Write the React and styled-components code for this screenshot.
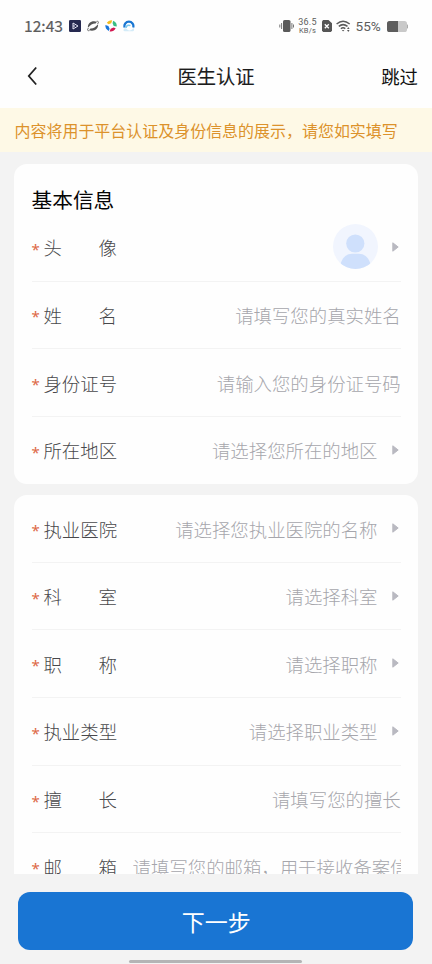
import React from "react";
import styled, { createGlobalStyle } from "styled-components";

const GlobalStyle = createGlobalStyle`
  * { box-sizing: border-box; }
  body {
    margin: 0;
    background: #f3f3f3;
    font-family: "Noto Sans CJK SC", sans-serif;
  }
`;

const Screen = styled.div`
  display: flex;
  flex-direction: column;
  width: 432px;
  height: 964px;
  overflow: hidden;
  background: #f3f3f3;
`;

const StatusBar = styled.header`
  display: flex;
  justify-content: space-between;
  align-items: center;
  flex: none;
  height: 52px;
  padding: 0 24px 0 24px;
  background: #fefefe;
  color: #5c5c5c;
`;

const StatusGroup = styled.div`
  display: flex;
  align-items: center;
  gap: ${(p) => p.$gap}px;
`;

const Clock = styled.span`
  width: 38px;
  margin-right: 1px;
  margin-top: -2px;
  font: 400 15.6px/20px "Noto Sans CJK SC", sans-serif;
  -webkit-text-stroke: 0.2px currentColor;
  white-space: nowrap;
`;

const NetSpeed = styled.span`
  display: flex;
  flex-direction: column;
  width: 19px;
  align-items: center;
  font: 400 9px/9px Roboto, sans-serif;
  letter-spacing: 0.2px;
  white-space: nowrap;
`;

const SpeedUnit = styled.span`
  font-size: 7.5px;
  line-height: 7px;
`;

const Percent = styled.span`
  width: 27px;
  font: 400 13.6px/18px Roboto, sans-serif;
  white-space: nowrap;
`;

const NavBar = styled.nav`
  display: grid;
  grid-template-columns: 80px 1fr 80px;
  align-items: center;
  flex: none;
  height: 56px;
  padding: 0 14px 8px 24px;
  background: #fefefe;
`;

const BackButton = styled.button`
  display: flex;
  padding: 0;
  border: 0;
  background: none;
`;

const Title = styled.h1`
  margin: 0;
  padding-right: 10px;
  text-align: center;
  font-size: 19.3px;
  line-height: 28px;
  font-weight: 400;
  -webkit-text-stroke: 0.1px currentColor;
  color: #1c1c1c;
`;

const SkipButton = styled.button`
  padding: 0;
  border: 0;
  background: none;
  text-align: right;
  font: 400 18.4px/28px "Noto Sans CJK SC", sans-serif;
  color: #111;
`;

const Notice = styled.p`
  flex: none;
  height: 44px;
  margin: 0;
  padding-left: 14.5px;
  background: #fef9e6;
  color: #dc922b;
  font-size: 15.97px;
  line-height: 44px;
  white-space: nowrap;
`;

const FormArea = styled.main`
  display: flex;
  flex-direction: column;
  gap: 11px;
  flex: none;
  height: 722px;
  padding: 12px 14px 0;
  overflow: hidden;
`;

const Card = styled.section`
  flex: none;
  height: ${(p) => (p.$height ? `${p.$height}px` : "auto")};
  padding: ${(p) => p.$top || 0}px 17px 0 18px;
  border-radius: 13px;
  background: #fefefe;
`;

const CardTitle = styled.h2`
  height: 28px;
  margin: 0 0 1px -0.5px;
  font-size: 20.7px;
  line-height: 28px;
  font-weight: 400;
  color: #050505;
`;

const Row = styled.div`
  display: flex;
  align-items: center;
  height: 67.65px;
  border-bottom: 1px solid ${(p) => (p.$last ? "transparent" : "#f3f3f3")};
`;

const Required = styled.span`
  width: 12px;
  flex: none;
  margin-left: -0.6px;
  padding-top: 3px;
  font: 400 15px/24px "Noto Sans", sans-serif;
  color: #dd6845;
`;

const Label = styled.span`
  display: flex;
  justify-content: space-between;
  flex: none;
  width: 73.6px;
  font-size: 18.4px;
  line-height: 28px;
  font-weight: 300;
  color: #48484b;
`;

const Value = styled.span`
  flex: 1;
  min-width: 0;
  margin-left: 15.6px;
  margin-right: ${(p) => (p.$arrow ? 14.5 : 0.3)}px;
  overflow: hidden;
  text-align: ${(p) => (p.$clipped ? "left" : "right")};
  white-space: nowrap;
  font-size: 18.4px;
  line-height: 28px;
  font-weight: 300;
  color: #a6a6ac;
`;

const AvatarSlot = styled.span`
  display: flex;
  margin-left: auto;
  margin-right: 14px;
  margin-bottom: 1px;
`;

const ArrowIcon = styled.svg`
  flex: none;
  width: 7px;
  height: 10px;
  margin-right: 2px;
  margin-bottom: 1px;
`;

const Footer = styled.footer`
  display: flex;
  flex-direction: column;
  align-items: center;
  flex: 1;
  padding: 18px 18.5px 0 18px;
`;

const NextButton = styled.button`
  width: 395px;
  height: 58px;
  flex: none;
  padding: 0 0 0 1px;
  border: 0;
  border-radius: 12px;
  background: #1975d3;
  color: #fff;
  font: 400 23px/58px "Noto Sans CJK SC", sans-serif;
`;

const HomeIndicator = styled.div`
  width: 173px;
  height: 3px;
  margin-top: 10px;
  border-radius: 2px;
  background: #b4b4b5;
`;

const PlayAppIcon = () => (
  <svg width="12" height="12" viewBox="0 0 12 12">
    <rect width="12" height="12" rx="1.2" fill="#262950" />
    <path d="M4 3v6l5-3-5-3M4 6h2" fill="none" stroke="#e5e5f5" strokeWidth="1" />
  </svg>
);

const PlanetIcon = () => (
  <svg width="12" height="12" viewBox="0 0 13 12">
    <path d="M1 7.8C.7 3.6 3.6.9 7.6.9q1.8 0 3 .7L9.3 3.2Q5.2 2.8 1 7.8z" fill="#555" />
    <path d="M12 4.2c.3 4.2-2.6 6.9-6.6 6.9q-1.8 0-3-.7l1.3-1.6Q7.8 9.2 12 4.2z" fill="#555" />
    <path d="M1.5 8.2C0 10.2.3 11.5 2.7 11M11.5 3.8C13 1.8 12.7.5 10.3 1" fill="none" stroke="#666" strokeWidth="1" />
  </svg>
);

const PinwheelIcon = () => (
  <svg width="12" height="12" viewBox="0 0 12 12">
    <path d="M1.8 2.8Q4-.3 7.2.4L6.2 3.3 3.6 4.3z" fill="#f3bd20" />
    <path d="M8.2.7q3.9 1.7 3.5 5.7L8.7 6 7.6 3.3z" fill="#39bd83" />
    <path d="M10.7 8.3Q8.5 12.2 4.6 11.5l1.1-2.8 2.8-1.2z" fill="#d31850" />
    <path d="M3.8 11.1Q0 9 .4 5.1l3 .8 1.2 2.8z" fill="#1875db" />
  </svg>
);

const CloudIcon = () => (
  <svg width="12" height="12" viewBox="0 0 12 12">
    <path d="M1.6 7.5A4.5 4.5 0 1 1 10.2 7.5" fill="none" stroke="#1976d2" strokeWidth="2.2" />
    <path d="M3 8a2.8 2.8 0 0 1 4.4-2.3" fill="none" stroke="#79c7ef" strokeWidth="1.5" />
    <path d="M.7 9.3c.8-1.5 2.3-1.4 3.3 0 2 2 4.7 1.4 6.4-1.3 1 .7 1 3-.3 3.2H1.7C.5 11.2.2 10.2.7 9.3z" fill="#d3ebf8" />
  </svg>
);

const VibrateIcon = () => (
  <svg width="15" height="12" viewBox="0 0 15 12">
    <rect x="4" y="0" width="7.5" height="12" rx="1.6" fill="#5a5a5a" />
    <path d="M2.6 3v6M.8 4.5v3M12.9 3v6M14.5 4.5v3" stroke="#777" strokeWidth="1" />
  </svg>
);

const SimIcon = () => (
  <svg width="10" height="12" viewBox="0 0 10 12">
    <path d="M1.2 0H6.5L10 3.2v7.6L8.8 12H1.2L0 10.8V1.2z" fill="#565656" />
    <path d="M2.8 4.2l4 4M6.8 4.2l-4 4" stroke="#fff" strokeWidth="1.3" />
  </svg>
);

const WifiIcon = () => (
  <svg width="15" height="12" viewBox="0 0 15 12">
    <g fill="none" stroke="#5a5a5a" strokeWidth="1.5">
      <path d="M.6 4Q7-1.5 13.7 4" />
      <path d="M2.8 6.4Q7 2.8 11.5 6.4" />
      <path d="M4.9 8.7Q7 6.9 9.3 8.7" />
    </g>
    <path d="M5.8 9.9h2.6L7.1 11.6z" fill="#5a5a5a" />
    <path d="M11 9l1.3-2 1.3 2zM11 10h2.6l-1.3 2z" fill="#5a5a5a" />
  </svg>
);

const BatteryIcon = () => (
  <svg width="21" height="11" viewBox="0 0 21 11">
    <rect width="20" height="11" rx="2.6" fill="#c9c9c9" />
    <path d="M20 3.5h.4q.6 0 .6.8v2.4q0 .8-.6.8H20z" fill="#aaa" />
    <path d="M2.6 0H11v11H2.6A2.6 2.6 0 0 1 0 8.4V2.6A2.6 2.6 0 0 1 2.6 0z" fill="#5d5d5d" />
  </svg>
);

const Avatar = () => (
  <svg width="45" height="45" viewBox="0 0 45 45">
    <defs>
      <clipPath id="avatar-circle"><circle cx="22.5" cy="22.5" r="22.5" /></clipPath>
    </defs>
    <circle cx="22.5" cy="22.5" r="22.5" fill="#f1f5fe" />
    <g clipPath="url(#avatar-circle)" fill="#cfe0fc">
      <circle cx="22.3" cy="19.5" r="9.1" />
      <path d="M7.5 45v-5C9.5 33 14 29.7 19 29.7h7c5 0 9.5 3.5 11.5 10.3v5z" />
    </g>
  </svg>
);

const Arrow = () => (
  <ArrowIcon viewBox="0 0 7 10">
    <path d="M.8.8 6.2 5 .8 9.2z" fill="#b9b9c1" stroke="#b9b9c1" strokeWidth="1" strokeLinejoin="round" />
  </ArrowIcon>
);

function Field({ label, hint, arrow, clipped, last, children }) {
  return (
    <Row $last={last}>
      <Required>*</Required>
      <Label>{[...label].map((c) => <span key={c}>{c}</span>)}</Label>
      {children ? <AvatarSlot>{children}</AvatarSlot> : <Value $arrow={arrow} $clipped={clipped}>{hint}</Value>}
      {arrow && <Arrow />}
    </Row>
  );
}

export default function App() {
  return (
    <>
      <GlobalStyle />
      <Screen>
        <StatusBar>
          <StatusGroup $gap={6}>
            <Clock>12:43</Clock>
            <PlayAppIcon />
            <PlanetIcon />
            <PinwheelIcon />
            <CloudIcon />
          </StatusGroup>
          <StatusGroup $gap={4.5}>
            <VibrateIcon />
            <NetSpeed>36.5<SpeedUnit>KB/s</SpeedUnit></NetSpeed>
            <SimIcon />
            <WifiIcon />
            <Percent>55%</Percent>
            <BatteryIcon />
          </StatusGroup>
        </StatusBar>
        <NavBar>
          <BackButton aria-label="返回">
            <svg width="16" height="20" viewBox="0 0 16 20">
              <path d="M12.2 1.5 4.8 10l7.4 8.5" fill="none" stroke="#222" strokeWidth="1.8" />
            </svg>
          </BackButton>
          <Title>医生认证</Title>
          <SkipButton>跳过</SkipButton>
        </NavBar>
        <Notice>内容将用于平台认证及身份信息的展示，请您如实填写</Notice>
        <FormArea>
          <Card $top={21} $height={320}>
            <CardTitle>基本信息</CardTitle>
            <Field label="头像" arrow><Avatar /></Field>
            <Field label="姓名" hint="请填写您的真实姓名" />
            <Field label="身份证号" hint="请输入您的身份证号码" />
            <Field label="所在地区" hint="请选择您所在的地区" arrow last />
          </Card>
          <Card $top={0.2}>
            <Field label="执业医院" hint="请选择您执业医院的名称" arrow />
            <Field label="科室" hint="请选择科室" arrow />
            <Field label="职称" hint="请选择职称" arrow />
            <Field label="执业类型" hint="请选择职业类型" arrow />
            <Field label="擅长" hint="请填写您的擅长" />
            <Field label="邮箱" hint="请填写您的邮箱，用于接收备案信息" clipped last />
          </Card>
        </FormArea>
        <Footer>
          <NextButton>下一步</NextButton>
          <HomeIndicator />
        </Footer>
      </Screen>
    </>
  );
}
